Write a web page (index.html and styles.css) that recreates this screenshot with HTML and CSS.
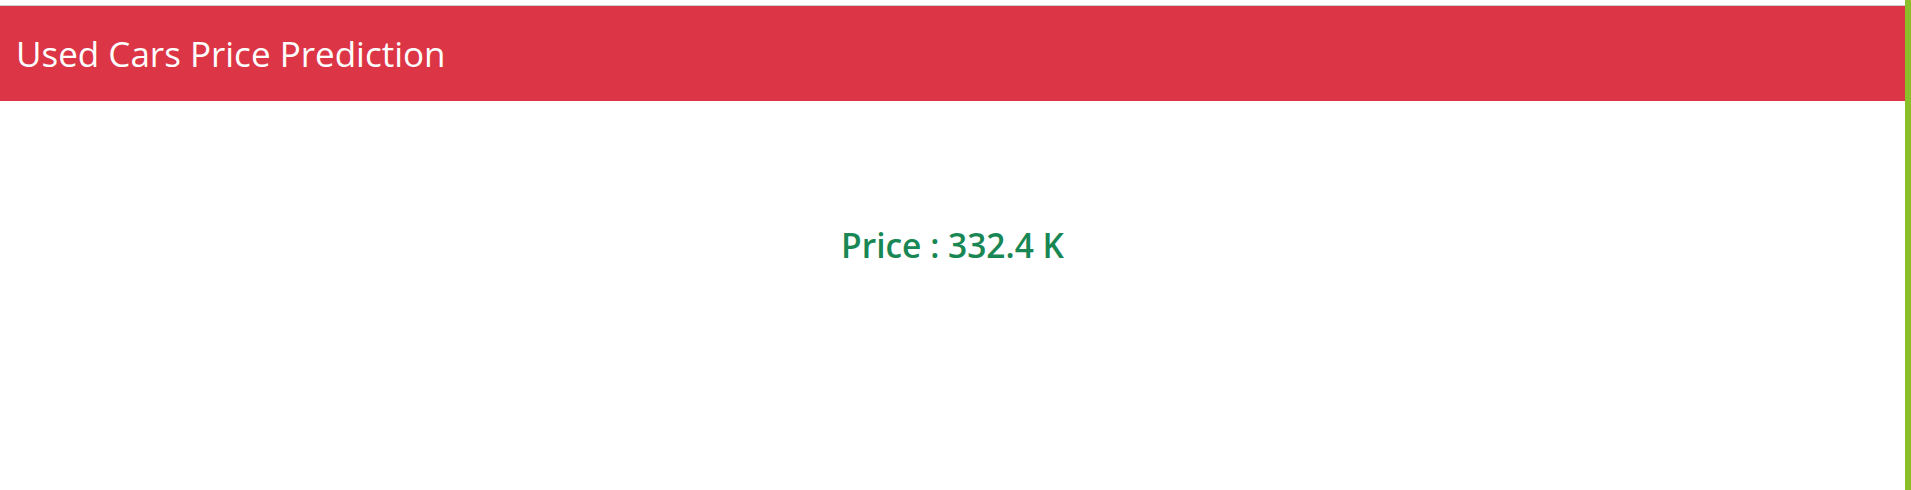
FILE: index.html
```html
<!DOCTYPE html>
<html>
<head>
<meta charset="utf-8">
<link rel="stylesheet" href="styles.css">
</head>
<body>
<div class="frame">
  <div class="page">
    <div class="topline"></div>
    <header class="navbar">
      <span class="brand">Used Cars Price Prediction</span>
    </header>
    <main class="content">
      <h2 class="price">Price : 332.4 K</h2>
    </main>
  </div>
  <div class="sidebar"></div>
</div>
</body>
</html>
```
FILE: styles.css
```css
html, body {
  margin: 0;
  padding: 0;
  height: 100%;
  background: #ffffff;
  font-family: "Open Sans", "Noto Sans", sans-serif;
}
.frame {
  display: flex;
  height: 490px;
}
.page {
  flex: 1;
  display: flex;
  flex-direction: column;
}
.topline {
  height: 5px;
  border-bottom: 1px solid #cfcfcf;
  background: #ffffff;
}
.navbar {
  height: 95px;
  background: #dc3545;
  display: flex;
  align-items: center;
  padding-left: 16px;
}
.brand {
  color: #ffffff;
  font-size: 35px;
  font-weight: 400;
}
.content {
  display: flex;
  justify-content: center;
  padding-top: 121px;
}
.price {
  margin: 0;
  color: #198754;
  font-size: 33.5px;
  font-weight: 600;
}
.sidebar {
  width: 6px;
  background: #8bbf2a;
}
```
